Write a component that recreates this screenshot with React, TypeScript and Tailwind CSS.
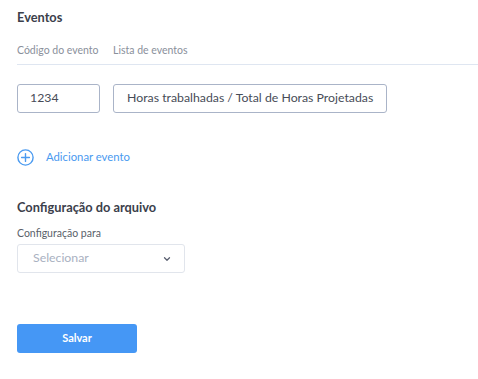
import { ChevronDown } from "lucide-react";

const font = { fontFamily: "Lato, 'Open Sans', sans-serif" };

function PlusCircle() {
  return (
    <svg width="17" height="17" viewBox="0 0 17 17" fill="none" stroke="#4a9af0" strokeWidth="1.4">
      <circle cx="8.5" cy="8.5" r="7.6" />
      <path d="M8.5 4.6v7.8M4.6 8.5h7.8" strokeLinecap="round" />
    </svg>
  );
}

export default function App() {
  return (
    <div className="w-[478px] h-[379px] bg-white pl-[17px] pt-[9px]" style={font}>
      <h2 className="text-[12.8px] font-bold text-[#3b404b] leading-[16px]">Eventos</h2>

      <div className="mt-[19px] flex border-b border-[#dfe6f1] pb-[8px] text-[10.5px] text-[#8a909b] leading-[12px]">
        <span className="w-[96px]">Código do evento</span>
        <span>Lista de eventos</span>
      </div>

      <div className="mt-[19px] flex gap-[13px]">
        <div className="w-[83px] h-[29px] rounded-[3px] border border-[#aab4c8] flex items-center pl-[12px] text-[12.3px] text-[#474c57]">
          1234
        </div>
        <div className="w-[274px] h-[29px] rounded-[3px] border border-[#aab4c8] flex items-center pl-[13px] text-[12.3px] text-[#474c57]">
          Horas trabalhadas / Total de Horas Projetadas
        </div>
      </div>

      <button className="mt-[36px] flex items-center gap-[12px] text-[11.3px] text-[#4a9af0]">
        <PlusCircle />
        <span>Adicionar evento</span>
      </button>

      <h2 className="mt-[33px] text-[12.8px] font-bold text-[#3b404b] leading-[16px]">Configuração do arquivo</h2>

      <div className="mt-[12px] text-[10.5px] text-[#5a5f6a] leading-[12px]">Configuração para</div>

      <div className="mt-[5px] w-[168px] h-[29px] rounded-[3px] border border-[#e1e5ec] flex items-center justify-between pl-[15px] pr-[12px] text-[12.3px] text-[#a9b1c1]">
        <span>Selecionar</span>
        <ChevronDown size={10} strokeWidth={3} color="#5a6070" />
      </div>

      <button className="mt-[51px] w-[120px] h-[29px] rounded-[3px] bg-[#4597f5] text-white text-[11px] font-bold">
        Salvar
      </button>
    </div>
  );
}
